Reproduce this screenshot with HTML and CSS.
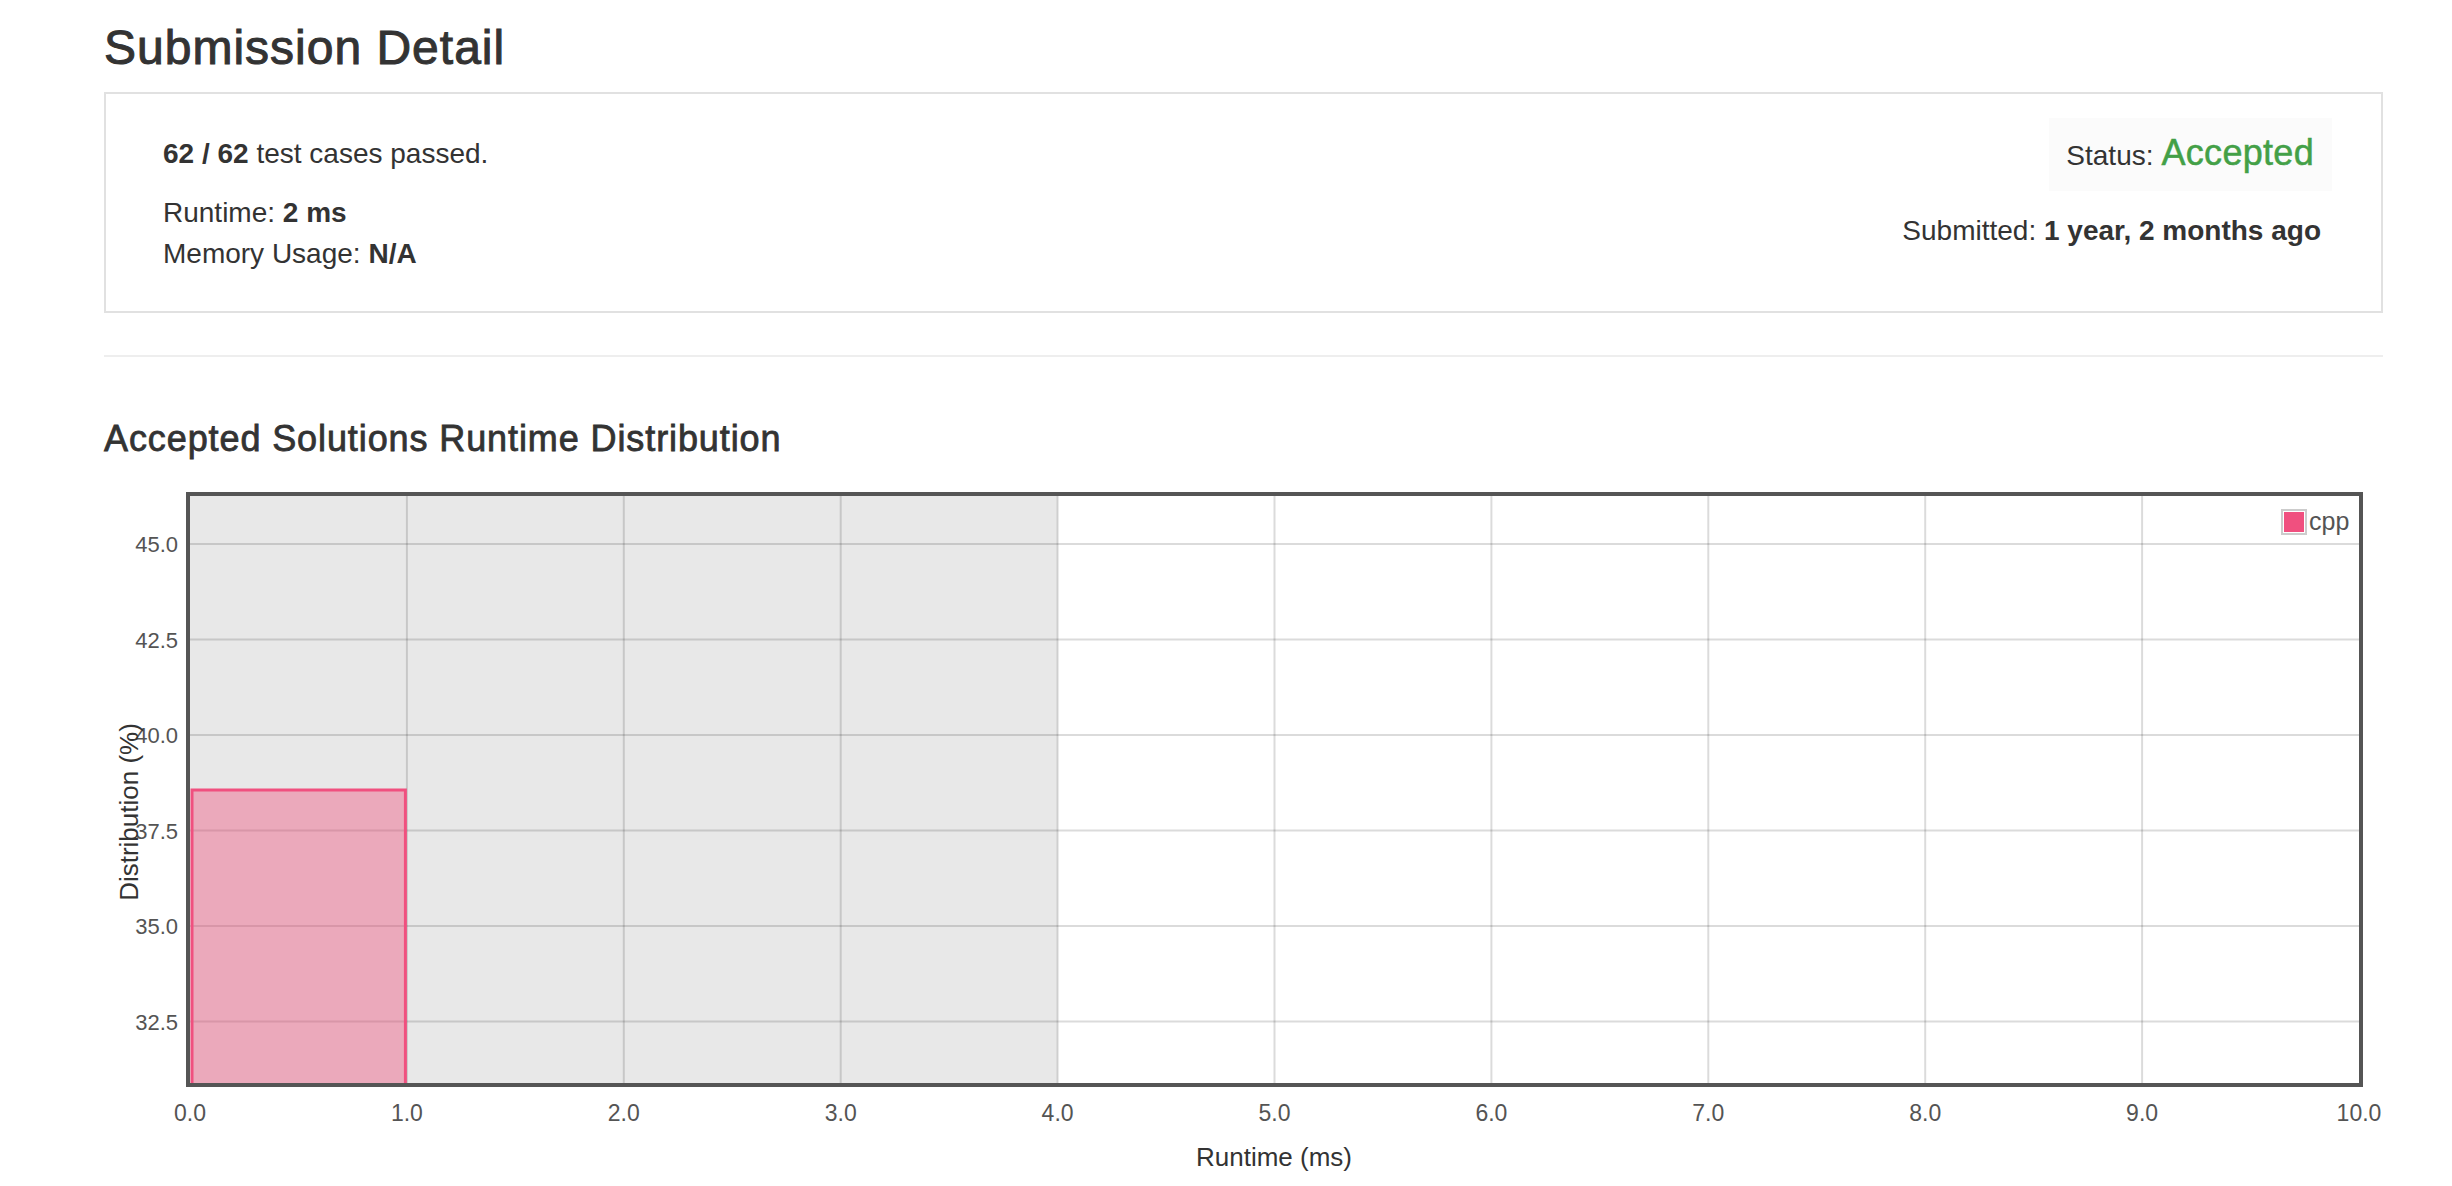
FILE: index.html
```html
<!DOCTYPE html>
<html>
<head>
<meta charset="utf-8">
<title>Submission Detail</title>
<link rel="stylesheet" href="styles.css">
</head>
<body>
<div class="page">
  <h3 class="title">Submission Detail</h3>
  <div class="panel">
    <div class="col-left">
      <p class="cases"><b>62 / 62</b> test cases passed.</p>
      <div class="line">Runtime: <b>2 ms</b></div>
      <div class="line">Memory Usage: <b>N/A</b></div>
    </div>
    <div class="col-right">
      <div class="status"><span class="status-label">Status:</span><span class="accepted">Accepted</span></div>
      <div class="submitted">Submitted: <b>1 year, 2 months ago</b></div>
    </div>
  </div>
  <hr class="sep">
  <h4 class="subtitle">Accepted Solutions Runtime Distribution</h4>
  <svg class="chart" width="2320" height="704" viewBox="0 0 2320 704">
    <rect x="86" y="26" width="2169" height="587" fill="#ffffff"/>
    <rect x="86" y="26" width="867.6" height="587" fill="#e8e8e8"/>
    <g class="grid">
      <line x1="302.9" y1="26" x2="302.9" y2="613"/>
      <line x1="519.8" y1="26" x2="519.8" y2="613"/>
      <line x1="736.7" y1="26" x2="736.7" y2="613"/>
      <line x1="953.6" y1="26" x2="953.6" y2="613"/>
      <line x1="1170.5" y1="26" x2="1170.5" y2="613"/>
      <line x1="1387.4" y1="26" x2="1387.4" y2="613"/>
      <line x1="1604.3" y1="26" x2="1604.3" y2="613"/>
      <line x1="1821.2" y1="26" x2="1821.2" y2="613"/>
      <line x1="2038.1" y1="26" x2="2038.1" y2="613"/>
      <line x1="86" y1="74" x2="2255" y2="74"/>
      <line x1="86" y1="169.5" x2="2255" y2="169.5"/>
      <line x1="86" y1="265" x2="2255" y2="265"/>
      <line x1="86" y1="360.5" x2="2255" y2="360.5"/>
      <line x1="86" y1="456" x2="2255" y2="456"/>
      <line x1="86" y1="551.5" x2="2255" y2="551.5"/>
    </g>
    <rect class="bar" x="88" y="320" width="213.4" height="295"/>
    <rect class="plot-border" x="84" y="24" width="2173" height="591"/>
    <rect class="legend-box" x="2178" y="40" width="24" height="24"/>
    <rect class="legend-swatch" x="2180" y="42" width="20" height="20"/>
    <text class="legend-text" x="2205" y="60">cpp</text>
    <g class="ytick">
      <text x="74" y="82">45.0</text>
      <text x="74" y="177.5">42.5</text>
      <text x="74" y="273">40.0</text>
      <text x="74" y="368.5">37.5</text>
      <text x="74" y="464">35.0</text>
      <text x="74" y="559.5">32.5</text>
    </g>
    <g class="xtick">
      <text x="86" y="651">0.0</text>
      <text x="302.9" y="651">1.0</text>
      <text x="519.8" y="651">2.0</text>
      <text x="736.7" y="651">3.0</text>
      <text x="953.6" y="651">4.0</text>
      <text x="1170.5" y="651">5.0</text>
      <text x="1387.4" y="651">6.0</text>
      <text x="1604.3" y="651">7.0</text>
      <text x="1821.2" y="651">8.0</text>
      <text x="2038.1" y="651">9.0</text>
      <text x="2255" y="651">10.0</text>
    </g>
    <text class="axis-title" x="34" y="342" transform="rotate(-90 34 342)">Distribution (%)</text>
    <text class="axis-title" x="1170" y="696">Runtime (ms)</text>
  </svg>
</div>
</body>
</html>
```

FILE: styles.css
```css
html, body {
  margin: 0;
  padding: 0;
  background: #ffffff;
}

body {
  font-family: "Liberation Sans", Arial, Helvetica, sans-serif;
  color: #333333;
  font-size: 28px;
  line-height: 41px;
}

.page {
  margin-left: 104px;
  width: 2279px;
}

.title {
  font-size: 48px;
  font-weight: normal;
  line-height: 52.8px;
  letter-spacing: 1px;
  -webkit-text-stroke: 1px #333333;
  margin: 22px 0 17px 0;
}

.panel {
  border: 2px solid #e1e1e1;
  display: flex;
  justify-content: space-between;
  align-items: flex-start;
}

.col-left {
  padding: 39px 0 37px 57px;
}

.cases {
  margin: 0 0 18px 0;
}

.line {
  margin: 0;
}

b {
  font-weight: bold;
}

.col-right {
  padding: 24px 60px 0 0;
  display: flex;
  flex-direction: column;
  align-items: flex-end;
}

.status {
  display: flex;
  align-items: baseline;
  background: #fbfbfb;
  padding: 17.5px 18px 19.5px 17px;
  margin-right: -11px;
}

.status-label {
  font-size: 28px;
  line-height: 1;
  margin-right: 8px;
}

.accepted {
  font-size: 36px;
  line-height: 1;
  color: #43a047;
  letter-spacing: 0.3px;
  -webkit-text-stroke: 0.5px #43a047;
}

.submitted {
  margin-top: 19px;
}

.sep {
  border: 0;
  border-top: 2px solid #eeeeee;
  height: 0;
  margin: 42px 0 0 0;
}

.subtitle {
  font-size: 36px;
  font-weight: normal;
  line-height: 40px;
  letter-spacing: 0.9px;
  -webkit-text-stroke: 0.8px #333333;
  margin: 62px 0 11px 0;
}

.chart {
  display: block;
  overflow: visible;
  font-family: "Liberation Sans", Arial, Helvetica, sans-serif;
}

.grid line {
  stroke: rgba(0, 0, 0, 0.14);
  stroke-width: 2;
}

.bar {
  fill: rgba(240, 80, 125, 0.41);
  stroke: #f0507f;
  stroke-width: 3;
}

.plot-border {
  fill: none;
  stroke: #555555;
  stroke-width: 4;
}

.legend-box {
  fill: #ffffff;
  stroke: #cccccc;
  stroke-width: 2;
}

.legend-swatch {
  fill: #f0507f;
}

.legend-text {
  font-size: 25px;
  fill: #545454;
}

.ytick text {
  font-size: 22px;
  fill: #545454;
  text-anchor: end;
}

.xtick text {
  font-size: 23px;
  fill: #545454;
  text-anchor: middle;
}

.axis-title {
  font-size: 26px;
  fill: #333333;
  text-anchor: middle;
}
```
